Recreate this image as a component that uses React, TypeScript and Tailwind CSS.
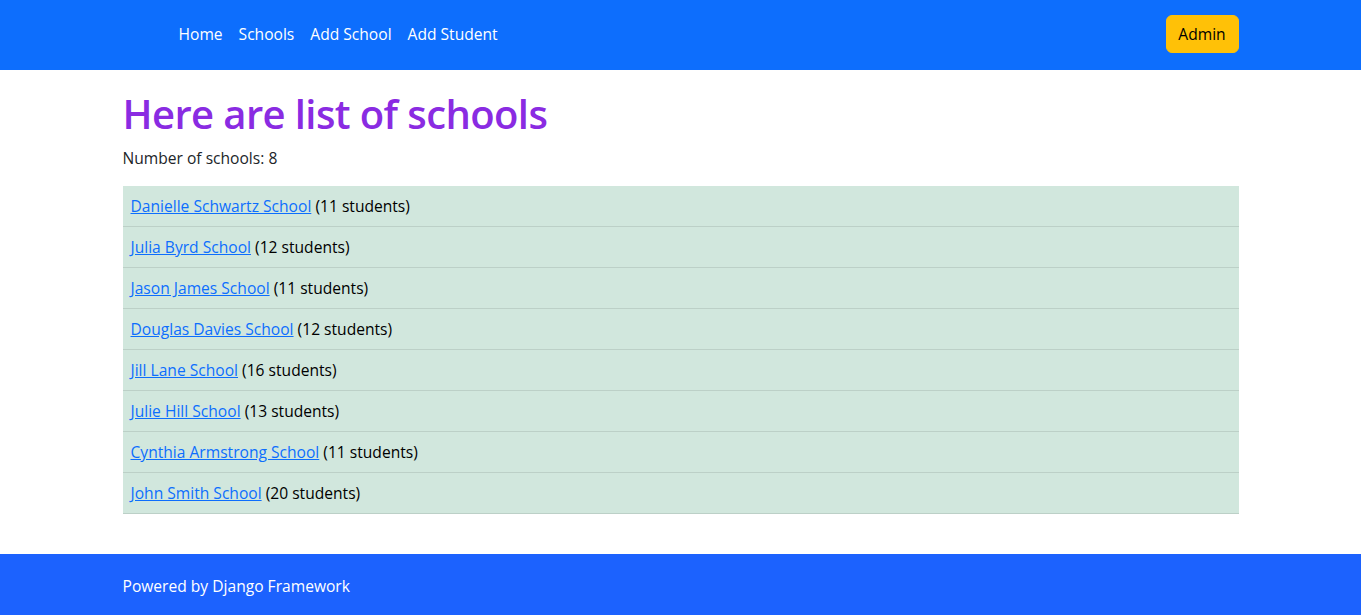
const schools = [
  { name: "Danielle Schwartz School", students: 11 },
  { name: "Julia Byrd School", students: 12 },
  { name: "Jason James School", students: 11 },
  { name: "Douglas Davies School", students: 12 },
  { name: "Jill Lane School", students: 16 },
  { name: "Julie Hill School", students: 13 },
  { name: "Cynthia Armstrong School", students: 11 },
  { name: "John Smith School", students: 20 },
];

const navLinks = ["Home", "Schools", "Add School", "Add Student"];

export default function App() {
  return (
    <div className="flex min-h-screen flex-col bg-white font-['Open_Sans',sans-serif] text-[15.6px] text-[#212529]">
      <nav className="bg-[#0d6efd] pt-[15px] pb-[17px]">
        <div className="mx-auto flex w-[1140px] items-center justify-between px-3">
          <ul className="flex items-center pl-12">
            {navLinks.map((link) => (
              <li key={link}>
                <a href="#" className="block px-2 py-[7px] leading-6 text-white">
                  {link}
                </a>
              </li>
            ))}
          </ul>
          <button
            type="button"
            className="w-[73px] rounded-md border border-[#ffc107] bg-[#ffc107] py-[6px] leading-6 text-black"
          >
            Admin
          </button>
        </div>
      </nav>

      <main className="mx-auto w-[1140px] px-3 pt-5 pb-10">
        <h1 className="mb-2 text-[40px] leading-[48px] font-semibold tracking-[-0.6px] text-[#8a2be2]">
          Here are list of schools
        </h1>
        <p className="mb-4 leading-6">Number of schools: 8</p>
        <table className="w-full border-collapse">
          <tbody>
            {schools.map((s) => (
              <tr key={s.name} className="border-b border-[#bcd0c7] bg-[#d1e7dd]">
                <td className="px-2 py-2 leading-6 text-black">
                  <a href="#" className="text-[#0d6efd] underline">
                    {s.name}
                  </a>{" "}
                  ({s.students} students)
                </td>
              </tr>
            ))}
          </tbody>
        </table>
      </main>

      <footer className="mt-auto bg-[#1c62fe] pt-5 pb-[17px]">
        <div className="mx-auto w-[1140px] px-3 leading-6 text-white">Powered by Django Framework</div>
      </footer>
    </div>
  );
}
